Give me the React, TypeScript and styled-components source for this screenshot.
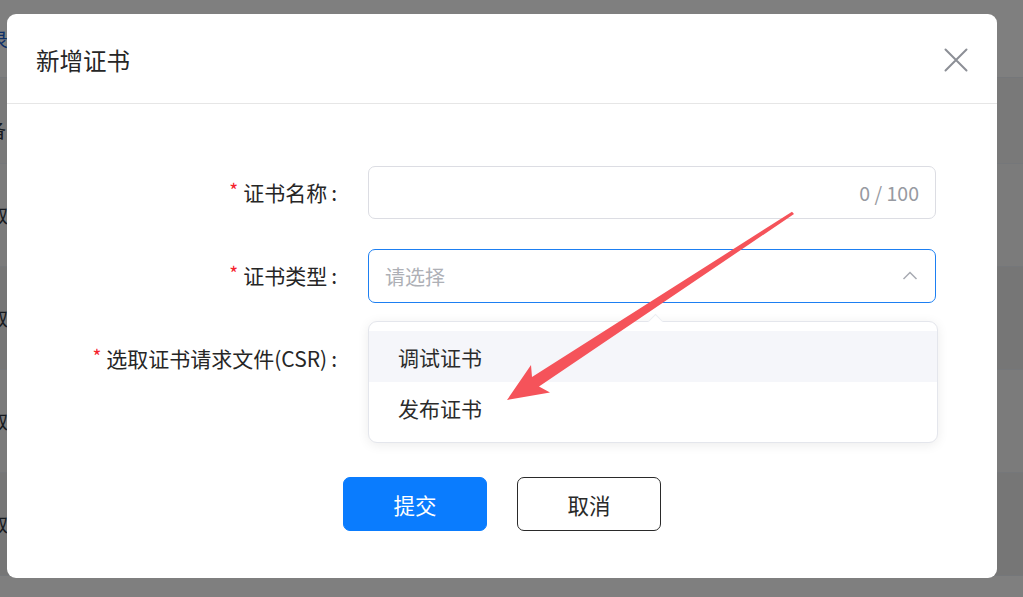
import React from "react";
import styled, { createGlobalStyle } from "styled-components";

const Global = createGlobalStyle`
  html, body { margin: 0; padding: 0; }
  body {
    font-family: "Noto Sans CJK SC", "Noto Sans", sans-serif;
    color: #333;
    background: #fff;
  }
  * { box-sizing: border-box; }
`;

const Page = styled.div`
  position: relative;
  width: 1023px;
  height: 597px;
  overflow: hidden;
  background: #fff;
`;

const BgList = styled.div`
  display: flex;
  flex-direction: column;
`;

const BgRow = styled.div<{ $h: number; $shade: string; $pt?: number }>`
  height: ${(p) => p.$h}px;
  background: ${(p) => p.$shade};
  display: flex;
  align-items: ${(p) => (p.$pt ? "flex-start" : "center")};
  padding-top: ${(p) => p.$pt ?? 0}px;
  border-bottom: 1px solid #ebeef5;
  overflow: hidden;
`;

const BgText = styled.span<{ $ml: number; $blue?: boolean }>`
  margin-left: ${(p) => p.$ml}px;
  font-size: 19px;
  line-height: 22px;
  white-space: nowrap;
  color: ${(p) => (p.$blue ? "#1a5fd0" : "#2c3440")};
`;

const Overlay = styled.div`
  position: absolute;
  inset: 0;
  background: rgba(0, 0, 0, 0.5);
`;

const Modal = styled.div`
  position: absolute;
  left: 7px;
  top: 14px;
  width: 990px;
  height: 564px;
  background: #fff;
  border-radius: 9px;
  display: flex;
  flex-direction: column;
`;

const Header = styled.div`
  height: 90px;
  border-bottom: 1px solid #e6e6e6;
  display: flex;
  align-items: center;
  justify-content: space-between;
  padding: 0 29px 0 29px;
`;

const Title = styled.div`
  font-size: 23.5px;
  color: #262626;
  line-height: 30px;
  margin-top: 2px;
`;

const CloseBtn = styled.button`
  border: none;
  background: none;
  padding: 0;
  width: 24px;
  height: 24px;
  display: flex;
  align-items: center;
  justify-content: center;
  cursor: pointer;
  margin-top: 2px;
`;

const Body = styled.div`
  padding: 62px 0 0 0;
  display: grid;
  grid-template-columns: 330px 568px;
  column-gap: 31px;
  row-gap: 31px;
  grid-auto-rows: 52px;
`;

const Label = styled.div`
  display: flex;
  align-items: center;
  justify-content: flex-end;
  font-size: 21px;
  color: #262626;
  white-space: nowrap;
`;

const Star = styled.span`
  color: #f5222d;
  font-size: 19px;
  margin-right: 5px;
  position: relative;
  top: -3px;
`;

const Colon = styled.span`
  margin-left: 4px;
`;

const InputBox = styled.div<{ $focus?: boolean }>`
  position: relative;
  height: ${(p) => (p.$focus ? 54 : 53)}px;
  border: 1px solid ${(p) => (p.$focus ? "#1d7ff2" : "#dcdde3")};
  border-radius: 7px;
  display: flex;
  align-items: center;
  justify-content: space-between;
  padding: 0 16px;
  background: #fff;
`;

const Counter = styled.span`
  margin-left: auto;
  font-size: 19.5px;
  color: #979aa1;
`;

const Placeholder = styled.span`
  font-size: 20px;
  color: #aeb0b6;
`;

const Dropdown = styled.div`
  position: absolute;
  top: calc(100% + 19px);
  left: -1px;
  width: 570px;
  padding: 9px 0;
  background: #fff;
  border: 1px solid #e4e6ec;
  border-radius: 9px;
  box-shadow: 0 2px 12px rgba(0, 0, 0, 0.08);
  z-index: 2;
`;

const Pointer = styled.div`
  position: absolute;
  top: -6px;
  left: 281px;
  width: 11px;
  height: 11px;
  background: #fff;
  border-top: 1px solid #eceef2;
  border-left: 1px solid #eceef2;
  transform: rotate(45deg);
`;

const Option = styled.div<{ $hover?: boolean }>`
  height: 51px;
  display: flex;
  align-items: center;
  padding-left: 29px;
  font-size: 21px;
  color: #2b2b2b;
  background: ${(p) => (p.$hover ? "#f5f6fa" : "#fff")};
  position: relative;
`;

const Footer = styled.div`
  display: flex;
  justify-content: center;
  gap: 30px;
  margin-top: 93px;
`;

const Button = styled.button<{ $primary?: boolean }>`
  width: 144px;
  height: 54px;
  border-radius: 7px;
  font-family: inherit;
  font-size: 21.5px;
  cursor: pointer;
  border: 1px solid ${(p) => (p.$primary ? "#0a7cfe" : "#2a2a2a")};
  background: ${(p) => (p.$primary ? "#0a7cfe" : "#fff")};
  color: ${(p) => (p.$primary ? "#fff" : "#2a2a2a")};
`;

const Annotation = styled.svg`
  position: absolute;
  left: 0;
  top: 0;
  z-index: 10;
  pointer-events: none;
`;

const Empty = styled.div``;

export default function App() {
  return (
    <Page>
      <Global />
      <BgList>
        <BgRow $h={78} $shade="#fff">
          <BgText $ml={-11} $blue>
            录
          </BgText>
        </BgRow>
        <BgRow $h={86} $shade="#f3f3f3" $pt={41}>
          <BgText $ml={-13}>备:</BgText>
        </BgRow>
        <BgRow $h={103} $shade="#f6f6f6">
          <BgText $ml={-11}>取消</BgText>
        </BgRow>
        <BgRow $h={103} $shade="#ececec">
          <BgText $ml={-11}>取消</BgText>
        </BgRow>
        <BgRow $h={103} $shade="#f6f6f6">
          <BgText $ml={-11}>取消</BgText>
        </BgRow>
        <BgRow $h={103} $shade="#ececec">
          <BgText $ml={-11}>取消</BgText>
        </BgRow>
      </BgList>
      <Overlay />
      <Modal>
        <Header>
          <Title>新增证书</Title>
          <CloseBtn aria-label="关闭">
            <svg width="24" height="24" viewBox="0 0 24 24">
              <path
                d="M1.5 1.5 L22.5 22.5 M22.5 1.5 L1.5 22.5"
                stroke="#8c8f96"
                strokeWidth="2"
                strokeLinecap="round"
                fill="none"
              />
            </svg>
          </CloseBtn>
        </Header>
        <Body>
          <Label>
            <Star>*</Star>证书名称<Colon>:</Colon>
          </Label>
          <InputBox>
            <Counter>0 / 100</Counter>
          </InputBox>
          <Label>
            <Star>*</Star>证书类型<Colon>:</Colon>
          </Label>
          <InputBox $focus>
            <Placeholder>请选择</Placeholder>
            <svg width="18" height="18" viewBox="0 0 18 18">
              <path
                d="M2.5 12 L9 5.5 L15.5 12"
                stroke="#a8abb2"
                strokeWidth="1.5"
                fill="none"
              />
            </svg>
            <Dropdown>
              <Pointer />
              <Option $hover>调试证书</Option>
              <Option>发布证书</Option>
            </Dropdown>
          </InputBox>
          <Label>
            <Star>*</Star>选取证书请求文件(CSR)<Colon>:</Colon>
          </Label>
          <Empty />
        </Body>
        <Footer>
          <Button $primary>提交</Button>
          <Button>取消</Button>
        </Footer>
      </Modal>
      <Annotation width="1023" height="597" viewBox="0 0 1023 597">
        <polygon
          points="794,214 539,386.5 550,392.5 507,400 531,365 532,377 792,211.8"
          fill="#f5535a"
        />
      </Annotation>
    </Page>
  );
}
